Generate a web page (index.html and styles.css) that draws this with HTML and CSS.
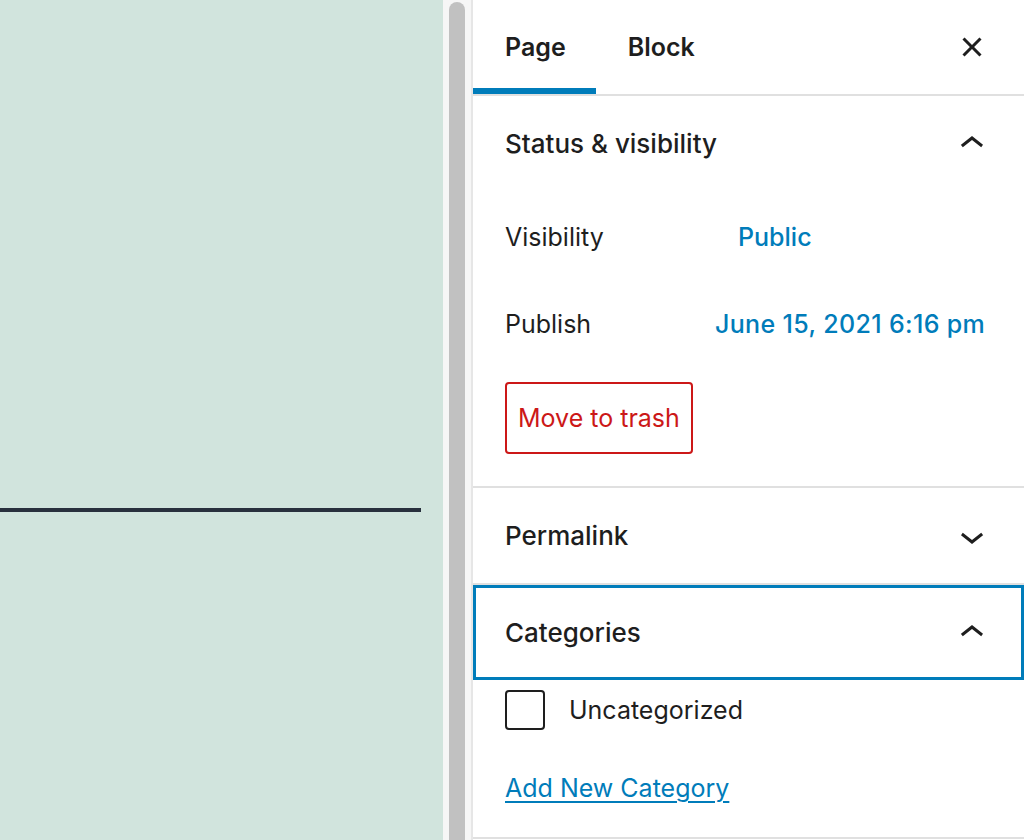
FILE: index.html
```html
<!DOCTYPE html>
<html lang="en">

<head>
    <meta charset="UTF-8">
    <meta name="viewport" content="width=device-width, initial-scale=1.0">
    <title>Page settings</title>
    <link rel="stylesheet" href="styles.css">
</head>

<body>
    <div class="editor-canvas">
        <div class="separator-block"></div>
    </div>

    <div class="scroll-track">
        <div class="scroll-thumb"></div>
    </div>

    <aside class="sidebar">
        <div class="sidebar-tabs">
            <button class="tab active">Page</button>
            <button class="tab">Block</button>
            <button class="icon-btn close-btn" aria-label="Close settings">
                <svg viewBox="0 0 24 24" width="48" height="48">
                    <path d="M12 13.06l3.712 3.713 1.061-1.06L13.061 12l3.712-3.712-1.06-1.06L12 10.938 8.288 7.227l-1.061 1.06L10.939 12l-3.712 3.712 1.06 1.061L12 13.061z" />
                </svg>
            </button>
        </div>

        <section class="panel">
            <div class="panel-header">
                <span class="panel-title">Status &amp; visibility</span>
                <svg class="chevron" viewBox="0 0 24 24" width="48" height="48">
                    <path d="M6.5 12.4L12 8l5.5 4.4-.9 1.2L12 10l-4.6 3.6-1-1.2z" />
                </svg>
            </div>
            <div class="panel-body status-body">
                <div class="field-row">
                    <span class="field-label">Visibility</span>
                    <a class="field-value" href="#">Public</a>
                </div>
                <div class="field-row">
                    <span class="field-label">Publish</span>
                    <a class="field-value date-value" href="#">June 15, 2021 6:16 pm</a>
                </div>
                <button class="trash-btn">Move to trash</button>
            </div>
        </section>

        <section class="panel">
            <div class="panel-header">
                <span class="panel-title">Permalink</span>
                <svg class="chevron" viewBox="0 0 24 24" width="48" height="48">
                    <path d="M17.5 11.6L12 16l-5.5-4.4.9-1.2L12 14l4.6-3.6 1 1.2z" />
                </svg>
            </div>
        </section>

        <section class="panel">
            <div class="panel-header focused">
                <span class="panel-title">Categories</span>
                <svg class="chevron" viewBox="0 0 24 24" width="48" height="48">
                    <path d="M6.5 12.4L12 8l5.5 4.4-.9 1.2L12 10l-4.6 3.6-1-1.2z" />
                </svg>
            </div>
            <div class="panel-body categories-body">
                <label class="check-row">
                    <span class="checkbox"></span>
                    <span>Uncategorized</span>
                </label>
                <a class="add-link" href="#">Add New Category</a>
            </div>
        </section>
    </aside>
</body>

</html>
```

FILE: styles.css
```css
* {
    margin: 0;
    padding: 0;
    box-sizing: border-box;
}

body {
    display: flex;
    height: 840px;
    overflow: hidden;
    font-family: Inter, 'Noto Sans', sans-serif;
    color: #1e1e1e;
    background: #fff;
}

/* left: the page being edited */
.editor-canvas {
    flex: 0 0 443px;
    background: #d1e4dd;
    padding-top: 508px;
}

.separator-block {
    width: 421px;
    height: 4px;
    background: #28303d;
}

.scroll-track {
    flex: 0 0 28px;
    background: #f6f6f6;
    padding: 2px 6px 0;
}

.scroll-thumb {
    height: 100%;
    background: #c1c1c1;
    border-radius: 8px 8px 0 0;
}

/* right: settings sidebar */
.sidebar {
    flex: 1;
    border-left: 2px solid #e6e6e6;
    background: #fff;
}

button {
    font: inherit;
    color: inherit;
    background: none;
    border: 0;
    cursor: pointer;
}

.sidebar-tabs {
    display: flex;
    align-items: stretch;
    height: 96px;
    border-bottom: 2px solid #e0e0e0;
}

.tab {
    padding: 0 32px;
    font-size: 25px;
    font-weight: 600;
}

.tab.active {
    padding-right: 30px;
    box-shadow: inset 0 -6px 0 #007cba;
}

.icon-btn {
    display: flex;
    align-items: center;
    justify-content: center;
}

.close-btn {
    margin-left: auto;
    margin-right: 28px;
}

.close-btn svg,
.chevron {
    fill: #1e1e1e;
}

.panel {
    border-bottom: 2px solid #e0e0e0;
}

.panel-header {
    display: flex;
    align-items: center;
    justify-content: space-between;
    height: 95px;
    padding: 0 28px 0 32px;
}

.panel-header.focused {
    box-shadow: inset 0 0 0 3px #007cba;
}

.panel-title {
    font-size: 26px;
    font-weight: 500;
}

.panel-body {
    padding: 10px 32px 32px;
}

.field-row {
    display: flex;
    align-items: center;
    height: 72px;
    font-size: 25px;
}

.field-row + .field-row {
    margin-top: 15px;
}

.field-label {
    flex: 0 0 233px;
}

.field-value {
    color: #007cba;
    text-decoration: none;
    font-weight: 500;
}

.date-value {
    margin-left: -23px;
    letter-spacing: 0.35px;
}

.trash-btn {
    margin-top: 22px;
    height: 72px;
    padding: 0 11px;
    border: 2px solid #cc1818;
    border-radius: 4px;
    color: #cc1818;
    font-size: 25px;
}

.categories-body {
    padding: 10px 32px 29px;
}

.check-row {
    display: flex;
    align-items: center;
    gap: 24px;
    font-size: 25px;
}

.checkbox {
    width: 40px;
    height: 40px;
    border: 2px solid #1e1e1e;
    border-radius: 4px;
}

.add-link {
    display: block;
    margin-top: 38px;
    line-height: 40px;
    font-size: 25px;
    color: #007cba;
    text-decoration: underline;
    text-decoration-thickness: 2px;
    text-underline-offset: 4px;
}
```
